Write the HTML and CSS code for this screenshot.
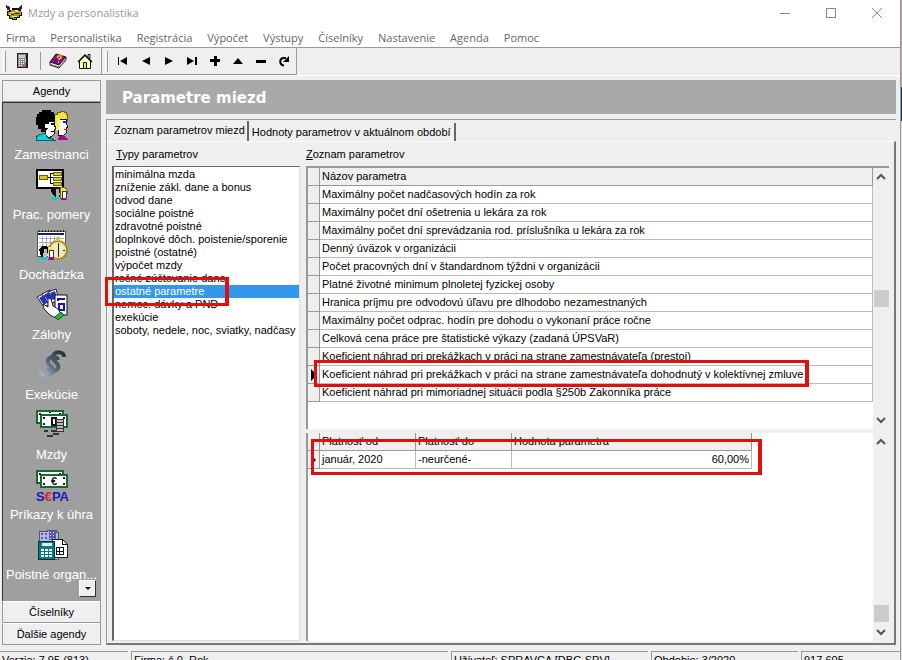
FILE: index.html
```html
<!DOCTYPE html>
<html lang="sk">
<head>
<meta charset="utf-8">
<title>Mzdy a personalistika</title>
<link rel="stylesheet" href="styles.css">
</head>
<body>
<div class="desktop">
<div class="app">
  <header class="titlebar">
    <svg class="app-icon" width="17" height="16" viewBox="0 0 17 16" shape-rendering="crispEdges"><path d="M1 6h2V5h3V3h7v1h2v3h1v4h-2v2h-3v2H6v-1H3v-3H1z" fill="#111"/><path d="M2 7h3V5h8v1h2v4h-2v2h-3v2H7v-1H4v-3H2z" fill="#a8981c"/><path d="M4 7h4v1H4zM9 5h3v2H9zM6 11h5v1H6zM3 9h2v1H3z" fill="#f1e65a"/><path d="M5 9h3v1H5zM9 8h4v1H9zM8 12h3v1H8z" fill="#222"/><path d="M0 0h1v1h2v1h1v3H1V3H0zM16 0v4h-3V2h1V1h1V0z" fill="#152a66"/></svg>
    <span class="app-title">Mzdy a personalistika</span>
    <button class="win" aria-label="Minimalizovať"><svg width="12" height="12"><path d="M1 6.500H11" stroke="#888"/></svg></button>
    <button class="win" aria-label="Maximalizovať"><svg width="12" height="12"><rect x="1.500" y="1.500" width="9" height="9" fill="none" stroke="#888"/></svg></button>
    <button class="win" aria-label="Zavrieť"><svg width="12" height="12"><path d="M1 1l10 10M11 1L1 11" stroke="#888"/></svg></button>
  </header>
  <nav class="menu">
    <a href="#">Firma</a><a href="#">Personalistika</a><a href="#">Registrácia</a><a href="#">Výpočet</a><a href="#">Výstupy</a><a href="#">Číselníky</a><a href="#">Nastavenie</a><a href="#">Agenda</a><a href="#">Pomoc</a>
  </nav>
  <div class="toolbars">
    <div class="toolbar">
      <i class="grip"></i>
      <button class="tool" aria-label="Kalkulačka"><svg width="16" height="18" viewBox="0 0 16 18" shape-rendering="crispEdges"><path d="M3 1h11v15H3z" fill="#222"/><path d="M4 2h8v13H4z" fill="#888"/><path d="M5 3h6v3H5z" fill="#c3d3d0"/><path d="M5 7h1v1H5zM7 7h1v1H7zM9 7h1v1H9zM11 7h1v1h-1zM5 9h1v1H5zM7 9h1v1H7zM9 9h1v1H9zM11 9h1v1h-1zM5 11h1v1H5zM7 11h1v1H7zM9 11h1v1H9zM5 13h1v1H5zM7 13h1v1H7z" fill="#fff"/><path d="M9 13h3v1H9z" fill="#d22"/></svg></button>
      <i class="sep"></i>
      <button class="tool" aria-label="Pomocník"><svg width="18" height="18" viewBox="0 0 18 18"><path d="M7 2l10 3-7 8L1 10z" fill="#7b1678" stroke="#2c0830"/><path d="M1 10v3l9 3 7-8V5l-7 8z" fill="#fff" stroke="#2c0830"/><path d="M1 12l9 3 7-8" fill="none" stroke="#888"/><path d="M8 6l1-2h3v2l-2 1v1M9 10h1" fill="none" stroke="#ffb820" stroke-width="1.500"/></svg></button>
      <button class="tool" aria-label="Domov"><svg width="18" height="18" viewBox="0 0 18 18"><path d="M12 2.500h2v4h-2z" fill="#eee" stroke="#111"/><path d="M3.500 9L9 3.500 14.500 9v7.500h-11z" fill="#ffffc8" stroke="#111"/><path d="M2 10l7-7 7 7" fill="none" stroke="#111" stroke-width="1.500"/><path d="M7.500 10.500h3v6h-3z" fill="#ffe94a" stroke="#111"/></svg></button>
    </div>
    <div class="toolbar navtools">
      <i class="grip"></i>
      <button class="tool nav" aria-label="Prvý"><svg width="12" height="12"><path d="M1 2h1v8H1zM10 2v8L3 6z"/></svg></button>
      <button class="tool nav" aria-label="Predchádzajúci"><svg width="12" height="12"><path d="M10 2v8L2 6z"/></svg></button>
      <button class="tool nav" aria-label="Nasledujúci"><svg width="12" height="12"><path d="M2 2v8l8-4z"/></svg></button>
      <button class="tool nav" aria-label="Posledný"><svg width="12" height="12"><path d="M1 2v8l7-4zM9 2h2v8H9z"/></svg></button>
      <button class="tool nav" aria-label="Pridať"><svg width="12" height="12"><path d="M5 1h3v3h3v3H8v4H5V7H1V4h4z"/></svg></button>
      <button class="tool nav" aria-label="Upraviť"><svg width="12" height="12"><path d="M1 9h10L6 3z"/></svg></button>
      <button class="tool nav" aria-label="Odstrániť"><svg width="12" height="12"><path d="M1 5h10v3H1z"/></svg></button>
      <button class="tool nav" aria-label="Obnoviť"><svg width="12" height="12"><path d="M6 10.500C1 10 1 3 6 3h2" fill="none" stroke="#000" stroke-width="2"/><path d="M11 1v6H5z"/></svg></button>
    </div>
  </div>

  <div class="main">
    <aside class="sidebar">
      <button class="group">Agendy</button>
      <div class="agenda">
        <a class="entry" href="#"><svg width="32" height="32" viewBox="0 0 32 32" shape-rendering="crispEdges"><path d="M19 5h2V3h3V2h4v1h2v2h1v6h-9l-1 8-3 2z" fill="#f0e440" stroke="#6a6000"/><path d="M23 10h7v4l2 4-2 1v5l-2 2h-6v-7z" fill="#fff" stroke="#111"/><path d="M21 9h3v8l-2 5h-2z" fill="#f7ed56"/><path d="M27 12h3v2h-3z" fill="#22a"/><path d="M28 20h3v1h-3z" fill="#d11"/><path d="M22 31l1-4 5-1 4 5z" fill="#b0009a"/><path d="M0 8h1V5h2V3h3V1h9v2h3v3h1v6l-7 2v5l-2 4H5v-3H2v-4H0z" fill="#000"/><path d="M12 12h6v4l2 3-2 2v4l-2 2-3 2-4-4v-4l3-2z" fill="#fff" stroke="#111"/><path d="M9 15h4v4H9zM10 21h5v5h-5z" fill="#fff"/><path d="M15 14h3v2h-3zM15 22h3v1h-3z" fill="#000"/><path d="M0 31v-3l3-2 6-2 3 5 3 0 3 2z" fill="#13d0d5" stroke="#066"/></svg><span>Zamestnanci</span></a>
        <a class="entry" href="#"><svg width="32" height="32" viewBox="0 0 32 32" shape-rendering="crispEdges"><path d="M1 1h26v18H1z" fill="#fff" stroke="#000" stroke-width="2"/><path d="M11 8h6M14 4v11M14 4h4M14 14h4" fill="none" stroke="#000"/><path d="M3 6h8v4H3zM17 3h8v3h-8zM17 8h8v3h-8zM17 13h8v3h-8z" fill="#d6ca22" stroke="#6d6300"/><path d="M15 20l3-2h6v10h-4l-4-3z" fill="#111"/><path d="M20 20h3v3l1 2-1 3h-3z" fill="#aaa"/><path d="M24 18h5l2 3v4l-2 4h-5z" fill="#efe35c" stroke="#776c20"/><path d="M26 22h4v3l1 1-1 3h-4z" fill="#fff" stroke="#333"/><path d="M15 31l2-3h5v3z" fill="#1cc"/><path d="M25 31v-2h5l1 2z" fill="#a0a"/></svg><span>Prac. pomery</span></a>
        <a class="entry" href="#"><svg width="32" height="32" viewBox="0 0 32 32" shape-rendering="crispEdges"><path d="M1 2h28v25H1z" fill="#fff" stroke="#555"/><path d="M2 4h26v2H2z" fill="#102080"/><path d="M3 9h25M3 13h25M3 17h25M3 21h25M6 7v20M10 7v20M14 7v20M18 7v20M22 7v20" stroke="#a5aab8"/><path d="M3 1v2M6 1v2M9 1v2M12 1v2M15 1v2M18 1v2M21 1v2M24 1v2M27 1v2" stroke="#222"/><g shape-rendering="auto"><circle cx="22" cy="21" r="9" fill="#f0e8be" stroke="#a98e18" stroke-width="2"/></g><path d="M20 8h4v4h-4z" fill="#d9c535"/><path d="M22 14v14M15 21h2M27 21h2" fill="none" stroke="#222"/><path d="M3 20l4-3h4l2 3-2 8H5z" fill="#000"/><path d="M8 20h3v3l1 2-1 3H7z" fill="#bbb"/><path d="M12 18h5l1 3v7h-6z" fill="#efe35c"/><path d="M13 21h4v3l1 2-1 2h-4z" fill="#fff" stroke="#333"/><path d="M2 31l2-3h7v3z" fill="#1cc"/><path d="M12 31l2-3h4v3z" fill="#a0a"/></svg><span>Dochádzka</span></a>
        <a class="entry" href="#"><svg width="32" height="32" viewBox="0 0 32 32"><g fill="#fff" stroke="#222"><path d="M1 8l8-4 6 10-7 4z"/><path d="M6 5l8-4 6 10-7 5z"/><path d="M12 3l8-3 3 11-7 3z"/></g><path d="M3 9l5-3 4 7-4 3zM8 6l5-3 4 7-4 3zM14 4l5-2 2 7-4 2z" fill="#2635b8"/><path d="M19 6h12v20H19z" fill="#fff" stroke="#111"/><path d="M22 10h7M22 9v3M23 15h5v6h-5z" fill="none" stroke="#1313bc" stroke-width="2"/><path d="M7 15l5 3V9l3 1 2 7 5 3 3 5-5 4-6-3-6-6z" fill="#fff" stroke="#222"/><path d="M19 28l6-5 3 3-6 5z" fill="#28b52c" stroke="#063"/></svg><span>Zálohy</span></a>
        <a class="entry" href="#"><svg width="32" height="32" viewBox="0 0 32 32"><defs><linearGradient id="steel" x1="1" y1="0" x2="0" y2="1"><stop offset="0" stop-color="#263240"/><stop offset=".5" stop-color="#526273"/><stop offset="1" stop-color="#a9bac9"/></linearGradient></defs><path d="M28 8C28 2 19 2 17 7c-2 6 7 6 5 12-2 5-9 3-10 0M5 20c-1 7 9 8 12 3 2-6-8-7-5-12 2-4 9-4 10 0" fill="none" stroke="url(#steel)" stroke-width="4"/></svg><span>Exekúcie</span></a>
        <a class="entry" href="#"><svg width="32" height="32" viewBox="0 0 32 32" shape-rendering="crispEdges"><path d="M1 2h26v12H1z" fill="#fff" stroke="#17682c" stroke-width="2"/><path d="M5 6h26v12H5z" fill="#fff" stroke="#17682c" stroke-width="2"/><path d="M7 8h2v2H7zM27 8h2v2h-2zM7 14h2v2H7zM3 4h2v2H3zM23 4h2v1h-2zM13 3h2v1h-2z" fill="#222"/><path d="M16 9h4v7h-4z" fill="#fff" stroke="#111" stroke-width="2"/><g fill="#bbb" stroke="#333"><ellipse cx="24" cy="21" rx="4" ry="2"/><ellipse cx="24" cy="18" rx="4" ry="2"/><ellipse cx="24" cy="15" rx="4" ry="2"/><ellipse cx="24" cy="12" rx="4" ry="2"/><ellipse cx="18" cy="22" rx="3" ry="1"/><ellipse cx="10" cy="22" rx="2" ry="1"/><ellipse cx="20" cy="25" rx="3" ry="1"/><ellipse cx="14" cy="27" rx="3" ry="1"/></g></svg><span>Mzdy</span></a>
        <a class="entry" href="#"><svg width="32" height="32" viewBox="0 0 32 32"><path d="M1 2h26v12H1z" fill="#fff" stroke="#17682c" stroke-width="2"/><path d="M5 6h26v12H5z" fill="#fff" stroke="#17682c" stroke-width="2"/><path d="M7 8h2v2H7zM27 8h2v2h-2zM7 14h2v2H7zM27 14h2v2h-2zM3 4h2v2H3zM23 4h2v1h-2z" fill="#222"/><text class="euro" x="15" y="16">€</text><text class="sepa" x="0" y="32">S<tspan class="red">€</tspan>PA</text></svg><span>Príkazy k úhra</span></a>
        <a class="entry" href="#"><svg width="32" height="32" viewBox="0 0 32 32" shape-rendering="crispEdges"><path d="M3 2h8V1h9v2h2v27H3z" fill="#b6b6ef" stroke="#556"/><path d="M5 4h2v2H5zM9 4h2v2H9zM5 8h2v2H5zM9 8h2v2H9z" fill="#606098"/><path d="M13 2h7v9h-7z" fill="#5a5ab4"/><path d="M14 3h1v1h-1zM17 3h1v1h-1zM14 6h1v1h-1zM17 6h1v1h-1zM14 9h1v1h-1zM17 9h1v1h-1z" fill="#dde"/><path d="M16 10h10l5 5v13H16z" fill="#fff" stroke="#222"/><path d="M26 10v5h5M20 18h7v7h-7zM23 18v7M20 22h7" fill="none" stroke="#111"/><path d="M2 12h16v18H2z" fill="#087b88" stroke="#033"/><path d="M6 14h10v3H6z" fill="#d8f5f2"/><path d="M5 20h3v2H5zM9 20h3v2H9zM13 20h3v2h-3zM5 23h3v2H5zM9 23h3v2H9zM13 23h3v2h-3zM5 26h3v2H5zM9 26h3v2H9zM13 26h3v2h-3z" fill="#fff"/></svg><span>Poistné organ...</span></a>
        <button class="more" aria-label="Ďalšie položky"><svg width="6" height="4"><path d="M0 0h6L3 3z"/></svg></button>
      </div>
      <button class="group">Číselníky</button>
      <button class="group">Ďalšie agendy</button>
    </aside>

    <main class="content">
      <h1 class="banner">Parametre miezd</h1>
      <div class="page">
        <div class="tabs" role="tablist">
          <button class="tab active" role="tab" aria-selected="true">Zoznam parametrov miezd</button>
          <button class="tab" role="tab" aria-selected="false">Hodnoty parametrov v aktuálnom období</button>
        </div>
        <div class="sheet">
          <section class="types">
            <h2 class="caption"><u>T</u>ypy parametrov</h2>
            <ul class="list">
              <li>minimálna mzda</li><li>zníženie zákl. dane a bonus</li><li>odvod dane</li><li>sociálne poistné</li><li>zdravotné poistné</li><li>doplnkové dôch. poistenie/sporenie</li><li>poistné (ostatné)</li><li>výpočet mzdy</li><li>ročné zúčtovanie dane</li><li class="selected">ostatné parametre<i class="mark mark-type"></i></li><li>nemoc. dávky a PND</li><li>exekúcie</li><li>soboty, nedele, noc, sviatky, nadčasy</li>
            </ul>
          </section>
          <section class="params">
            <h2 class="caption"><u>Z</u>oznam parametrov</h2>
            <div class="grid upper">
              <div class="cells">
                <table>
                  <thead><tr><th class="ind"></th><th>Názov parametra</th></tr></thead>
                  <tbody>
                    <tr><td class="ind"></td><td>Maximálny počet nadčasových hodín za rok</td></tr>
                    <tr><td class="ind"></td><td>Maximálny počet dní ošetrenia u lekára za rok</td></tr>
                    <tr><td class="ind"></td><td>Maximálny počet dní sprevádzania rod. príslušníka u lekára za rok</td></tr>
                    <tr><td class="ind"></td><td>Denný úväzok v organizácii</td></tr>
                    <tr><td class="ind"></td><td>Počet pracovných dní v štandardnom týždni v organizácii</td></tr>
                    <tr><td class="ind"></td><td>Platné životné minimum plnoletej fyzickej osoby</td></tr>
                    <tr><td class="ind"></td><td>Hranica príjmu pre odvodovú úľavu pre dlhodobo nezamestnaných</td></tr>
                    <tr><td class="ind"></td><td>Maximálny počet odprac. hodín pre dohodu o vykonaní práce ročne</td></tr>
                    <tr><td class="ind"></td><td>Celková cena práce pre štatistické výkazy (zadaná ÚPSVaR)</td></tr>
                    <tr><td class="ind"></td><td>Koeficient náhrad pri prekážkach v práci na strane zamestnávateľa (prestoj)</td></tr>
                    <tr><td class="ind"><svg width="6" height="12"><path d="M0 0l6 6-6 6z"/></svg></td><td><span class="marked">Koeficient náhrad pri prekážkach v práci na strane zamestnávateľa dohodnutý v kolektívnej zmluve<i class="mark mark-param"></i></span></td></tr>
                    <tr><td class="ind"></td><td>Koeficient náhrad pri mimoriadnej situácii podla §250b Zakonníka práce</td></tr>
                  </tbody>
                </table>
              </div>
              <div class="scroll"><svg width="10" height="8"><path class="chev" d="M1 6l4-4 4 4"/></svg><i class="space"></i><i class="thumb"></i><i class="space"></i><svg width="10" height="8"><path class="chev" d="M1 2l4 4 4-4"/></svg></div>
            </div>
            <div class="grid lower">
              <div class="cells">
                <div class="marked-table">
                  <table class="values">
                    <thead><tr><th class="ind"></th><th class="date">Platnosť od</th><th class="date">Platnosť do</th><th>Hodnota parametra</th></tr></thead>
                    <tbody><tr><td class="ind"><svg width="6" height="12"><path d="M1 2l4 4-4 4z"/></svg></td><td>január, 2020</td><td>-neurčené-</td><td class="num">60,00%</td></tr></tbody>
                  </table>
                  <i class="mark mark-value"></i>
                </div>
              </div>
              <div class="scroll end"><svg width="10" height="8"><path class="chev" d="M1 6l4-4 4 4"/></svg><i class="space"></i><i class="thumb"></i><svg width="10" height="8"><path class="chev" d="M1 2l4 4 4-4"/></svg></div>
            </div>
          </section>
        </div>
      </div>
    </main>
  </div>
  <footer class="status"><span>Verzia: 7.95 (813)</span><span>Firma: č.0, Rok</span><span>Užívateľ: SPRAVCA [DBG SPV]</span><span>Obdobie: 3/2020</span><span>917 605</span></footer>
</div>
<div class="behind"></div>
</div>
</body>
</html>
```
FILE: styles.css
```css
* { box-sizing: border-box; }
body { margin: 0; overflow: hidden; background: #efefef; color: #000; font: 11px/13px "Liberation Sans", sans-serif; }
button { margin: 0; padding: 0; border: 0; background: none; color: inherit; font: inherit; }
a { color: inherit; text-decoration: none; }
i { display: block; }
svg { display: block; flex: none; overflow: visible; }
/* The status bar runs on past the bottom of the visible area. */
.desktop { display: flex; height: calc(100vh + 12px); }
.app { flex: 1; min-width: 0; display: flex; flex-direction: column; }
.behind { width: 2px; border-left: 1px solid #999; background: linear-gradient(#b5aaa5 87px, #163564 87px, #163564 121px, #ddd 121px); }

.titlebar { display: flex; align-items: center; height: 26px; background: #fff; color: #999; font: 11px/18px "Open Sans", sans-serif; }
.app-icon { margin-left: 6px; }
.app-title { flex: 1; margin-left: 5px; }
.win { display: flex; align-items: center; justify-content: center; width: 46px; height: 26px; }
.menu { display: flex; gap: 15px; height: 22px; padding: 3px 6px; background: #fff; border-bottom: 1px solid #999; color: #666; font: 11px/18px "Open Sans", sans-serif; }

.toolbars { display: flex; height: 28px; border-bottom: 1px solid #fff; }
.toolbar { display: flex; align-items: center; height: 27px; padding: 0 3px; border-right: 1px solid #999; border-bottom: 1px solid #999; }
.grip { width: 3px; height: 21px; border-left: 1px solid #fff; border-right: 1px solid #999; }
.sep { width: 1px; height: 18px; margin: 0 3px 0 2px; background: #999; }
.tool { display: flex; align-items: center; justify-content: center; width: 27px; height: 24px; }
.grip + .tool { width: 32px; }
.navtools .tool, .navtools .grip + .tool { width: 23px; }
.navtools .grip { margin-right: 3px; }
.navtools { padding-right: 1px; }

.main { flex: 1; min-height: 0; display: flex; gap: 5px; padding: 4px 4px 6px 2px; }
.sidebar { width: 99px; display: flex; flex-direction: column; border-right: 1px solid #999; }
.group { height: 22px; border: 1px solid #999; border-top-color: #fff; border-right: 0; background: #efefef; }
.group:first-child { border-top-color: #999; }
.agenda { flex: 1; min-height: 0; position: relative; overflow: hidden; display: flex; flex-direction: column; gap: 12px; padding-top: 6px; border-top: 1px solid #333; border-left: 1px solid #333; background: #9f9f9f; color: #fff; font-size: 13px; line-height: 16px; white-space: nowrap; }
.entry { display: flex; flex-direction: column; align-items: center; height: 48px; }
.entry span { margin-top: 6px; }
.entry svg { height: 32px; }
.euro { font: bold 11px "Liberation Sans", sans-serif; fill: #111; }
.sepa { font: bold 13px "Liberation Sans", sans-serif; fill: #1b1bb4; }
.red { fill: #df2525; }
.more { position: absolute; right: 4px; bottom: 4px; display: flex; align-items: center; justify-content: center; width: 17px; height: 17px; border: 1px solid #333; border-top-color: #fff; border-left-color: #fff; background: #efefef; }

.content { flex: 1; min-width: 0; display: flex; flex-direction: column; gap: 5px; }
.banner { margin: 0; height: 34px; padding: 0 16px; background: #a9a9a9; color: #fff; font: bold 15px/36px "DejaVu Sans", sans-serif; }
.page { flex: 1; min-height: 0; display: flex; flex-direction: column; border: 1px solid #999; border-right: 0; border-bottom: 0; }
.tabs { display: flex; align-items: flex-end; height: 21px; }
.tab { height: 18px; padding: 0 3px; border-right: 2px solid #666; white-space: nowrap; }
.tab.active { height: 20px; padding: 0 2px 2px 7px; }
.sheet { flex: 1; min-height: 0; display: flex; gap: 6px; padding: 6px 5px 2px 5px; border-top: 1px solid #fff; border-right: 2px solid #777; border-bottom: 2px solid #777; }
.types { width: 188px; display: flex; flex-direction: column; }
.params { flex: 1; min-width: 0; display: flex; flex-direction: column; }
.caption { margin: 0; height: 18px; padding-left: 4px; font: inherit; }
.params .caption { padding-left: 0; }
.list { flex: 1; margin: 0; padding: 1px 0; border: 1px solid #ddd; border-top: 1px solid #666; border-left: 2px solid #666; background: #fff; list-style: none; white-space: nowrap; }
.list li { height: 13px; padding-left: 1px; }
.list .selected { position: relative; background: #3497ec; color: #fff; }
.grid { display: flex; background: #fff; border-left: 2px solid #999; }
.upper { height: 263px; border-top: 2px solid #999; }
.lower { flex: 1; min-height: 0; margin-top: 4px; }
.cells { flex: 1; min-width: 0; }
table { width: 100%; border-collapse: separate; border-spacing: 0; table-layout: fixed; }
th, td { height: 18px; padding: 0 2px; border-right: 1px solid #bbb; border-bottom: 1px solid #bbb; font-weight: normal; text-align: left; white-space: nowrap; }
th { background: #efefef; border-color: #999; }
.ind { width: 12px; padding: 0 3px; background: #efefef; border-color: #999; }
.scroll { width: 16px; display: flex; flex-direction: column; align-items: center; padding: 5px 0; background: #efefef; }
.space { flex: 1; }
.thumb { width: 15px; height: 17px; background: #ccc; }
.end .thumb { margin-bottom: 6px; }
.chev { fill: none; stroke: #555; stroke-width: 2; }
.marked-table { position: relative; width: 444px; }
.values .date { width: 96px; }
.values .num { text-align: right; }
.marked { position: relative; }

/* Red call-out frames drawn over the marked rows. */
.mark { position: absolute; z-index: 2; border: 4px solid #e10f0f; border-width: 3px 4px 3px 3px; }
.mark-type { left: -9px; top: -8px; width: 124px; height: 29px; }
.mark-param { left: -8px; right: -6px; top: -8px; bottom: -7px; }
.mark-value { left: 3px; right: -10px; top: 6px; bottom: -6px; }

.status { display: flex; gap: 3px; height: 21px; }
.status span { height: 21px; padding: 2px 2px; border-top: 1px solid #999; border-left: 1px solid #999; white-space: nowrap; overflow: hidden; }
.status span:nth-child(1) { width: 128px; border-left: 0; }
.status span:nth-child(2) { flex: 1; }
.status span:nth-child(3) { width: 197px; }
.status span:nth-child(4) { width: 147px; }
.status span:nth-child(5) { width: 99px; }
```
